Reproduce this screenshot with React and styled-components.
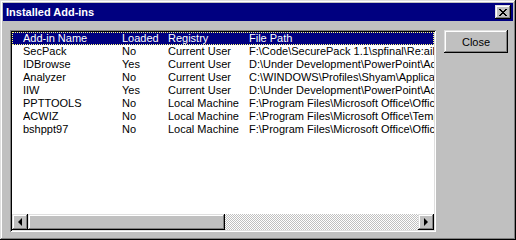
import React from "react";
import styled, { createGlobalStyle } from "styled-components";

const GlobalStyle = createGlobalStyle`
    body {
        margin: 0;
        background: #c0c0c0;
        font-family: "Liberation Sans", Arial, sans-serif;
    }
`;

const raised = `
    box-shadow: inset -1px -1px #000, inset 1px 1px #dfdfdf,
        inset -2px -2px #808080, inset 2px 2px #fff;
`;

const Window = styled.div`
    width: 516px;
    height: 240px;
    box-sizing: border-box;
    padding: 3px;
    background: #c0c0c0;
    display: flex;
    flex-direction: column;
    ${raised}
`;

const TitleBar = styled.div`
    height: 18px;
    background: #000080;
    color: #fff;
    display: flex;
    align-items: center;
    justify-content: space-between;
    padding: 0 2px 0 3px;
    font-weight: bold;
    font-size: 11px;
`;

const TitleButton = styled.div`
    width: 16px;
    height: 14px;
    box-sizing: border-box;
    background: #c0c0c0;
    display: flex;
    align-items: center;
    justify-content: center;
    ${raised}
`;

const Body = styled.div`
    flex: 1;
    display: flex;
    gap: 8px;
    padding: 9px 5px 5px 7px;
`;

const ListBox = styled.div`
    width: 426px;
    height: 202px;
    box-sizing: border-box;
    padding: 2px;
    background: #fff;
    display: flex;
    flex-direction: column;
    box-shadow: inset 1px 1px #808080, inset -1px -1px #fff,
        inset 2px 2px #000, inset -2px -2px #dfdfdf;
`;

const Rows = styled.div`
    flex: 1;
    overflow: hidden;
`;

const Row = styled.div`
    display: grid;
    grid-template-columns: 99px 46px 81px 1fr;
    height: 13px;
    line-height: 13px;
    box-sizing: border-box;
    padding-left: ${(p) => (p.$head ? 10 : 11)}px;
    font-size: 11px;
    white-space: nowrap;
    overflow: hidden;
    color: ${(p) => (p.$head ? "#fff" : "#000")};
    background: ${(p) => (p.$head ? "#000080" : "transparent")};
    border: ${(p) => (p.$head ? "1px dotted #ffff80" : "none")};
    line-height: ${(p) => (p.$head ? 11 : 13)}px;
`;

const Cell = styled.span`
    overflow: hidden;
`;

const ScrollBar = styled.div`
    height: 16px;
    display: flex;
`;

const ArrowButton = styled.div`
    width: 16px;
    height: 16px;
    box-sizing: border-box;
    background: #c0c0c0;
    display: flex;
    align-items: center;
    justify-content: center;
    ${raised}
`;

const Arrow = styled.div`
    width: 0;
    height: 0;
    border-top: 4px solid transparent;
    border-bottom: 4px solid transparent;
    ${(p) => (p.$dir === "left" ? "border-right: 4px solid #000;" : "border-left: 4px solid #000;")}
`;

const Thumb = styled.div`
    width: 197px;
    height: 16px;
    box-sizing: border-box;
    background: #c0c0c0;
    ${raised}
`;

const Track = styled.div`
    flex: 1;
    background-image: conic-gradient(#c0c0c0 25%, #fff 0 50%, #c0c0c0 0 75%, #fff 0);
    background-size: 2px 2px;
`;

const CloseButton = styled.button`
    width: 64px;
    height: 23px;
    border: none;
    padding: 0;
    background: #c0c0c0;
    font-family: "Liberation Sans", Arial, sans-serif;
    font-size: 11px;
    color: #000;
    ${raised}
`;

const addins = [
    ["SecPack", "No", "Current User", "F:\\Code\\SecurePack 1.1\\spfinal\\Re:aill"],
    ["IDBrowse", "Yes", "Current User", "D:\\Under Development\\PowerPoint\\Add-ins"],
    ["Analyzer", "No", "Current User", "C:\\WINDOWS\\Profiles\\Shyam\\Application Data"],
    ["IIW", "Yes", "Current User", "D:\\Under Development\\PowerPoint\\Add-ins"],
    ["PPTTOOLS", "No", "Local Machine", "F:\\Program Files\\Microsoft Office\\Office"],
    ["ACWIZ", "No", "Local Machine", "F:\\Program Files\\Microsoft Office\\Templates"],
    ["bshppt97", "No", "Local Machine", "F:\\Program Files\\Microsoft Office\\Office"],
];

export default function App() {
    return (
        <>
            <GlobalStyle />
            <Window>
                <TitleBar>
                    <span>Installed Add-ins</span>
                    <TitleButton>
                        <svg width="8" height="7" viewBox="0 0 8 7" shapeRendering="crispEdges">
                            <path d="M0 0h2v1h-2zM6 0h2v1h-2zM1 1h2v1h-2zM5 1h2v1h-2zM2 2h4v1h-4zM3 3h2v1h-2zM2 4h4v1h-4zM1 5h2v1h-2zM5 5h2v1h-2zM0 6h2v1h-2zM6 6h2v1h-2z" fill="#000" />
                        </svg>
                    </TitleButton>
                </TitleBar>
                <Body>
                    <ListBox>
                        <Rows>
                            <Row $head>
                                <Cell>Add-in Name</Cell>
                                <Cell>Loaded</Cell>
                                <Cell>Registry</Cell>
                                <Cell>File Path</Cell>
                            </Row>
                            {addins.map((a) => (
                                <Row key={a[0]}>
                                    {a.map((v, i) => (
                                        <Cell key={i}>{v}</Cell>
                                    ))}
                                </Row>
                            ))}
                        </Rows>
                        <ScrollBar>
                            <ArrowButton><Arrow $dir="left" /></ArrowButton>
                            <Thumb />
                            <Track />
                            <ArrowButton><Arrow $dir="right" /></ArrowButton>
                        </ScrollBar>
                    </ListBox>
                    <CloseButton>Close</CloseButton>
                </Body>
            </Window>
        </>
    );
}
